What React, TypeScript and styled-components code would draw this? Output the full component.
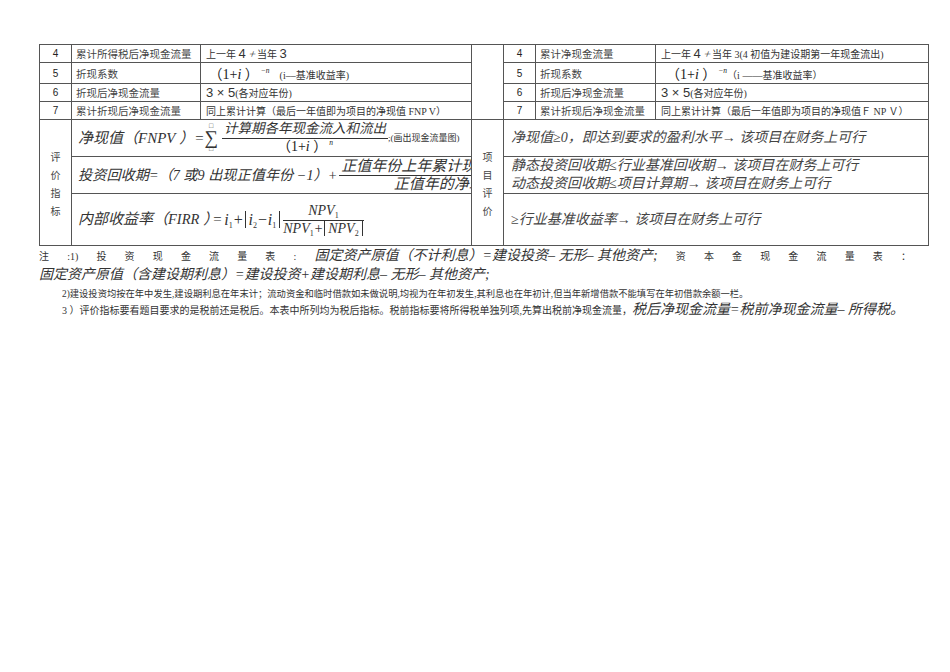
import styled, { createGlobalStyle } from 'styled-components';

const GlobalStyle = createGlobalStyle`
  html, body {
    margin: 0;
    padding: 0;
    background: #fff;
  }
  body {
    font-family: 'Liberation Serif', 'Noto Sans CJK SC', serif;
    color: #222;
  }
`;

const Page = styled.div`
  padding: 44px 0 0 39px;
  width: 889px;
`;

const Sheet = styled.table`
  border-collapse: collapse;
  table-layout: fixed;
  width: 889px;
`;

const Row = styled.tr<{ $h: number }>`
  height: ${(p) => p.$h}px;
`;

const Cell = styled.td`
  border: 1px solid #555;
  padding: 0;
  white-space: nowrap;
  overflow: hidden;
`;

const Num = styled(Cell)`
  text-align: center;
  font-family: 'Liberation Sans', 'Noto Sans CJK SC', sans-serif;
  font-size: 10px;
  color: #222;
`;

const Name = styled(Cell)`
  padding-left: 4px;
  font-size: 10.5px;
  color: #444;
`;

const Value = styled(Cell)`
  padding-left: 5px;
  font-size: 10px;
  color: #333;
`;

const LabelCell = styled(Cell)`
  text-align: center;
  vertical-align: middle;
`;

const LabelStack = styled.div`
  display: flex;
  flex-direction: column;
  align-items: center;
  gap: 6px;
  font-size: 10px;
  line-height: 12px;
  color: #444;
  padding-top: 4px;
`;

const FormulaCell = styled(Cell)`
  padding-left: 6px;
  font-style: italic;
  font-size: 15px;
  line-height: 15px;
  color: #333;
  vertical-align: middle;
`;

const CriteriaCell = styled(Cell)`
  padding-left: 7px;
  font-style: italic;
  font-size: 14px;
  color: #444;
  vertical-align: middle;
  line-height: 18px;
`;

const Line = styled.div`
  display: flex;
  align-items: center;
  & > * {
    flex-shrink: 0;
  }
`;

const Lead = styled.span<{ $size?: number }>`
  font-size: ${(p) => p.$size ?? 15}px;
`;

const Latin = styled.span<{ $size?: number }>`
  font-family: 'Liberation Serif', serif;
  ${(p) => (p.$size ? `font-size: ${p.$size}px;` : '')}
`;

const Tight = styled.span`
  margin-right: -6px;
`;

const Paren = styled.span<{ $size?: number }>`
  font-family: 'Liberation Serif', 'Noto Sans CJK SC', serif;
  font-size: ${(p) => p.$size ?? 14}px;
  font-style: normal;
  color: #222;
`;

const Sup = styled.sup`
  font-size: 7.5px;
  font-style: italic;
  line-height: 0;
  vertical-align: 6px;
  margin-left: 2px;
`;

const Sub = styled.sub`
  font-size: 8px;
  font-style: normal;
  line-height: 0;
  vertical-align: -3px;
`;

const Tiny = styled.span`
  font-size: 9px;
  font-style: normal;
  color: #333;
`;

const Big = styled.span`
  font-family: 'Liberation Sans', sans-serif;
  font-size: 13px;
`;

const Slant = styled.span`
  display: inline-block;
  transform: skewX(-20deg);
  font-size: 12px;
  margin: 0 1px;
`;

const Sigma = styled.span`
  display: inline-flex;
  flex-direction: column;
  align-items: center;
  font-style: normal;
  margin: 0 2px 0 0;
`;

const Box = styled.span`
  font-size: 7px;
  line-height: 7px;
  color: #444;
`;

const SigmaGlyph = styled.span`
  font-size: 19px;
  line-height: 16px;
`;

const Frac = styled.span<{ $size?: number }>`
  display: inline-flex;
  flex-direction: column;
  align-items: center;
  font-size: ${(p) => p.$size ?? 15}px;
  margin-left: 2px;
`;

const Numer = styled.span`
  border-bottom: 1px solid #333;
  padding: 0 2px 1px;
  line-height: 16px;
  align-self: stretch;
  text-align: center;
`;

const Denom = styled.span`
  line-height: 16px;
`;

const Abs = styled.span`
  border-left: 1px solid #333;
  border-right: 1px solid #333;
  padding: 0 3px;
  line-height: 16px;
  margin: 0 1px;
`;

const MathText = styled.span`
  font-family: 'Liberation Serif', serif;
  font-size: 16px;
  margin-left: 2px;
`;

const Notes = styled.div`
  width: 889px;
  padding-top: 1px;
`;

const JustLine = styled.div`
  display: flex;
  justify-content: space-between;
  align-items: baseline;
  width: 872px;
  height: 18px;
  line-height: 18px;
`;

const Small = styled.span<{ $size?: number }>`
  font-size: ${(p) => p.$size ?? 10}px;
  color: #333;
`;

const Em = styled.span`
  font-style: italic;
  font-size: 14px;
  color: #333;
`;

const NoteLine = styled.div<{ $indent?: number }>`
  height: 17.5px;
  line-height: 17.5px;
  white-space: nowrap;
  padding-left: ${(p) => p.$indent ?? 0}px;
`;

const rows = [
  { n: '4', name: '累计所得税后净现金流量', right: '累计净现金流量' },
  { n: '5', name: '折现系数', right: '折现系数' },
  { n: '6', name: '折现后净现金流量', right: '折现后净现金流量' },
  { n: '7', name: '累计折现后净现金流量', right: '累计折现后净现金流量' },
];

function Discount() {
  return (
    <Paren>
      （1+<i>i</i> ）<Sup>−n</Sup>
    </Paren>
  );
}

function Vertical({ text }: { text: string }) {
  return (
    <LabelStack>
      {text.split('').map((c, i) => (
        <span key={i}>{c}</span>
      ))}
    </LabelStack>
  );
}

const leftValues = [
  <>
    上一年 <Big>4</Big> <Slant>+</Slant>当年 <Big>3</Big>
  </>,
  <>
    &nbsp;
    <Discount />
    &nbsp;&nbsp;&nbsp;&nbsp;(i––基准收益率)
  </>,
  <>
    <Big>3 × 5</Big>(各对应年份)
  </>,
  <>同上累计计算（最后一年值即为项目的净现值 FNP V）</>,
];

const rightValues = [
  <>
    上一年 <Big>4</Big> <Slant>+</Slant>当年 3(4 初值为建设期第一年现金流出)
  </>,
  <>
    &nbsp;&nbsp;
    <Discount />（i ——基准收益率）
  </>,
  <>
    <Big>3 × 5</Big>(各对应年份)
  </>,
  <>同上累计计算（最后一年值即为项目的净现值Ｆ NP Ｖ）</>,
];

const spread1 = ['注', ':1)', '投', '资', '现', '金', '流', '量', '表', ':'];
const spread2 = ['资', '本', '金', '现', '金', '流', '量', '表', '：'];

export default function App() {
  return (
    <>
      <GlobalStyle />
      <Page>
        <Sheet>
          <colgroup>
            <col style={{ width: 32 }} />
            <col style={{ width: 129 }} />
            <col style={{ width: 271 }} />
            <col style={{ width: 32 }} />
            <col style={{ width: 32 }} />
            <col style={{ width: 120 }} />
            <col style={{ width: 273 }} />
          </colgroup>
          <tbody>
            {rows.map((r, i) => (
              <Row $h={18} key={r.n}>
                <Num>{r.n}</Num>
                <Name>{r.name}</Name>
                <Value>{leftValues[i]}</Value>
                {i === 0 && <Cell rowSpan={4} />}
                <Num>{r.n}</Num>
                <Name>{r.right}</Name>
                <Value>{rightValues[i]}</Value>
              </Row>
            ))}
            <Row $h={37}>
              <LabelCell rowSpan={3}>
                <Vertical text="评价指标" />
              </LabelCell>
              <FormulaCell colSpan={2}>
                <Line>
                  <Lead>
                    净现值（<Latin>FNPV</Latin> ）=
                  </Lead>
                  <Sigma>
                    <Box>□</Box>
                    <SigmaGlyph>∑</SigmaGlyph>
                    <Box>□</Box>
                  </Sigma>
                  <Frac $size={13.5}>
                    <Numer>计算期各年现金流入和流出</Numer>
                    <Denom>
                      <Paren $size={14}>
                        （1+<i>i</i> ）<Sup>n</Sup>
                      </Paren>
                    </Denom>
                  </Frac>
                  <Tiny>;(画出现金流量图)</Tiny>
                </Line>
              </FormulaCell>
              <LabelCell rowSpan={3}>
                <Vertical text="项目评价" />
              </LabelCell>
              <CriteriaCell colSpan={3}>
                净现值≥0，即达到要求的盈利水平→ 该项目在财务上可行
              </CriteriaCell>
            </Row>
            <Row $h={37}>
              <FormulaCell colSpan={2}>
                <Line>
                  <Lead $size={14.2}>投资回收期=（7 或9 出现正值年份 −1）+</Lead>
                  <Frac>
                    <Numer>正值年份上年累计现金流量的绝对值</Numer>
                    <Denom>正值年的净现金流量</Denom>
                  </Frac>
                </Line>
              </FormulaCell>
              <CriteriaCell colSpan={3}>
                静态投资回收期≤行业基准回收期→ 该项目在财务上可行
                <br />
                动态投资回收期≤项目计算期→ 该项目在财务上可行
              </CriteriaCell>
            </Row>
            <Row $h={52}>
              <FormulaCell colSpan={2}>
                <Line>
                  <Lead>
                    内部收益率（<Latin $size={14.5}>FIRR</Latin> <Tight>）</Tight>=
                  </Lead>
                  <MathText>
                    i<Sub>1</Sub>+
                    <Abs>
                      i<Sub>2</Sub>−i<Sub>1</Sub>
                    </Abs>
                  </MathText>
                  <Frac $size={14}>
                    <Numer>
                      <Latin>
                        NPV<Sub>1</Sub>
                      </Latin>
                    </Numer>
                    <Denom>
                      <Latin>
                        NPV<Sub>1</Sub>+
                        <Abs>
                          NPV<Sub>2</Sub>
                        </Abs>
                      </Latin>
                    </Denom>
                  </Frac>
                </Line>
              </FormulaCell>
              <CriteriaCell colSpan={3}>≥行业基准收益率→ 该项目在财务上可行</CriteriaCell>
            </Row>
          </tbody>
        </Sheet>
        <Notes>
          <JustLine>
            {spread1.map((c, i) => (
              <Small key={`a${i}`}>{c}</Small>
            ))}
            <Em>固定资产原值（不计利息）=建设投资– 无形– 其他资产;</Em>
            {spread2.map((c, i) => (
              <Small key={`b${i}`}>{c}</Small>
            ))}
          </JustLine>
          <NoteLine>
            <Em>固定资产原值（含建设期利息）=建设投资+建设期利息– 无形– 其他资产;</Em>
          </NoteLine>
          <NoteLine $indent={23}>
            <Small $size={9.3}>
              2)建设投资均按在年中发生,建设期利息在年末计；流动资金和临时借款如未做说明,均视为在年初发生,其利息也在年初计,但当年新增借款不能填写在年初借款余额一栏。
            </Small>
          </NoteLine>
          <NoteLine $indent={23}>
            <Small>
              3 ）评价指标要看题目要求的是税前还是税后。本表中所列均为税后指标。税前指标要将所得税单独列项,先算出税前净现金流量，
            </Small>
            <Em>税后净现金流量=税前净现金流量– 所得税。</Em>
          </NoteLine>
        </Notes>
      </Page>
    </>
  );
}
